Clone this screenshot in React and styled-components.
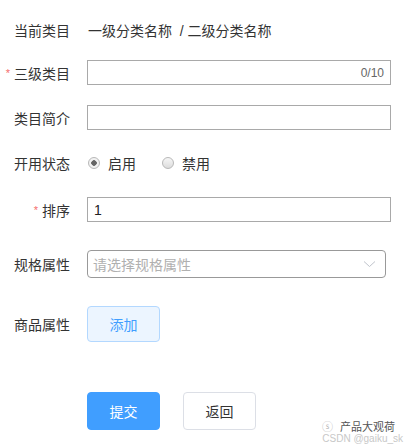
import React from "react";
import styled, { createGlobalStyle } from "styled-components";

const GlobalStyle = createGlobalStyle`
	html, body {
		margin: 0;
		padding: 0;
		background: #fff;
	}
	body {
		font-family: "Liberation Sans", "Noto Sans CJK SC", sans-serif;
		color: #333;
		font-size: 14px;
	}
`;

const App = () => {
	return (
		<Page>
			<GlobalStyle />
			<Form>
				<Item h={24} mt={18}>
					<Label>当前类目</Label>
					<Content>
						<Plain>一级分类名称&nbsp;&nbsp;/ 二级分类名称</Plain>
					</Content>
				</Item>
				<Item h={25} mt={18}>
					<Label required>三级类目</Label>
					<Content>
						<Input>
							<Count>0/10</Count>
						</Input>
					</Content>
				</Item>
				<Item h={25} mt={20}>
					<Label>类目简介</Label>
					<Content>
						<Input />
					</Content>
				</Item>
				<Item h={24} mt={21}>
					<Label>开用状态</Label>
					<Content gap={26}>
						<Radio>
							<Dot checked />
							启用
						</Radio>
						<Radio>
							<Dot />
							禁用
						</Radio>
					</Content>
				</Item>
				<Item h={25} mt={22}>
					<Label required>排序</Label>
					<Content>
						<Input>
							<Value>1</Value>
						</Input>
					</Content>
				</Item>
				<Item h={28} mt={28}>
					<Label>规格属性</Label>
					<Content>
						<Select>
							<Placeholder>请选择规格属性</Placeholder>
							<svg width="13" height="8" viewBox="0 0 13 8">
								<path d="M1 1.5 L6.5 6.5 L12 1.5" fill="none" stroke="#c0c4cc" strokeWidth="1" />
							</svg>
						</Select>
					</Content>
				</Item>
				<Item h={36} mt={28}>
					<Label>商品属性</Label>
					<Content>
						<Button kind="plain">添加</Button>
					</Content>
				</Item>
				<Item h={38} mt={50}>
					<Label />
					<Content>
						<Button kind="primary">提交</Button>
						<Button kind="default">返回</Button>
					</Content>
				</Item>
			</Form>
			<Watermark>
				<span>
					<WeIcon>ⓢ</WeIcon> 产品大观荷
				</span>
				<small>CSDN @gaiku_sk</small>
			</Watermark>
		</Page>
	);
};

export default App;

const Page = styled.div`
	position: relative;
	width: 407px;
	height: 447px;
	overflow: hidden;
`;

const Form = styled.div`
	display: flex;
	flex-direction: column;
`;

const Item = styled.div`
	display: flex;
	align-items: center;
	height: ${(p) => p.h}px;
	margin-top: ${(p) => p.mt}px;
`;

const Label = styled.div`
	width: 70px;
	flex-shrink: 0;
	text-align: right;
	color: #333;
	font-size: 14px;
	white-space: nowrap;
	&::before {
		content: ${(p) => (p.required ? '"*"' : "none")};
		color: #f56c6c;
		font-size: 11px;
		margin-right: 4px;
		position: relative;
		top: -2px;
	}
`;

const Content = styled.div`
	margin-left: 17px;
	flex: 1;
	display: flex;
	align-items: center;
	height: 100%;
	gap: ${(p) => p.gap ?? 23}px;
`;

const Plain = styled.span`
	color: #333;
	font-size: 14px;
	margin-left: 1px;
`;

const Input = styled.div`
	box-sizing: border-box;
	width: 304px;
	height: 100%;
	border: 1px solid #a9a9a9;
	display: flex;
	align-items: center;
	padding: 0 6px;
`;

const Count = styled.span`
	margin-left: auto;
	color: #666;
	font-size: 12px;
`;

const Value = styled.span`
	color: #222;
	font-size: 14px;
`;

const Radio = styled.label`
	display: flex;
	align-items: center;
	font-size: 14px;
	color: #333;
	&:first-child {
		margin-left: 1px;
	}
`;

const Dot = styled.span`
	box-sizing: border-box;
	width: 12px;
	height: 12px;
	border-radius: 50%;
	border: 1px solid #b8b8b8;
	background: ${(p) =>
		p.checked
			? "radial-gradient(circle, #666 0 2.5px, #f2f2f2 3px)"
			: "linear-gradient(#f6f6f6, #dcdcdc)"};
	margin-right: 8px;
`;

const Select = styled.div`
	box-sizing: border-box;
	width: 299px;
	height: 100%;
	border: 1px solid #999;
	border-radius: 4px;
	display: flex;
	align-items: center;
	justify-content: space-between;
	padding: 0 9px 0 5px;
`;

const Placeholder = styled.span`
	color: #b0b0b0;
	font-size: 14px;
`;

const palette = {
	plain: { bg: "#ecf5ff", border: "#b3d8ff", color: "#409eff" },
	primary: { bg: "#409eff", border: "#409eff", color: "#fff" },
	default: { bg: "#fff", border: "#dcdfe6", color: "#333" },
};

const Button = styled.button`
	box-sizing: border-box;
	width: 73px;
	height: 100%;
	border-radius: 4px;
	font-family: inherit;
	font-size: 14px;
	background: ${(p) => palette[p.kind].bg};
	border: 1px solid ${(p) => palette[p.kind].border};
	color: ${(p) => palette[p.kind].color};
	padding: 0;
`;

const Watermark = styled.div`
	position: absolute;
	right: 4px;
	bottom: 2px;
	display: flex;
	flex-direction: column;
	align-items: flex-end;
	line-height: 12px;
	span {
		font-size: 11px;
		color: #555;
		margin-right: 8px;
	}
	small {
		font-size: 10px;
		color: #c8c8c8;
	}
`;

const WeIcon = styled.i`
	font-style: normal;
	color: #bbb;
	margin-right: 4px;
`;
